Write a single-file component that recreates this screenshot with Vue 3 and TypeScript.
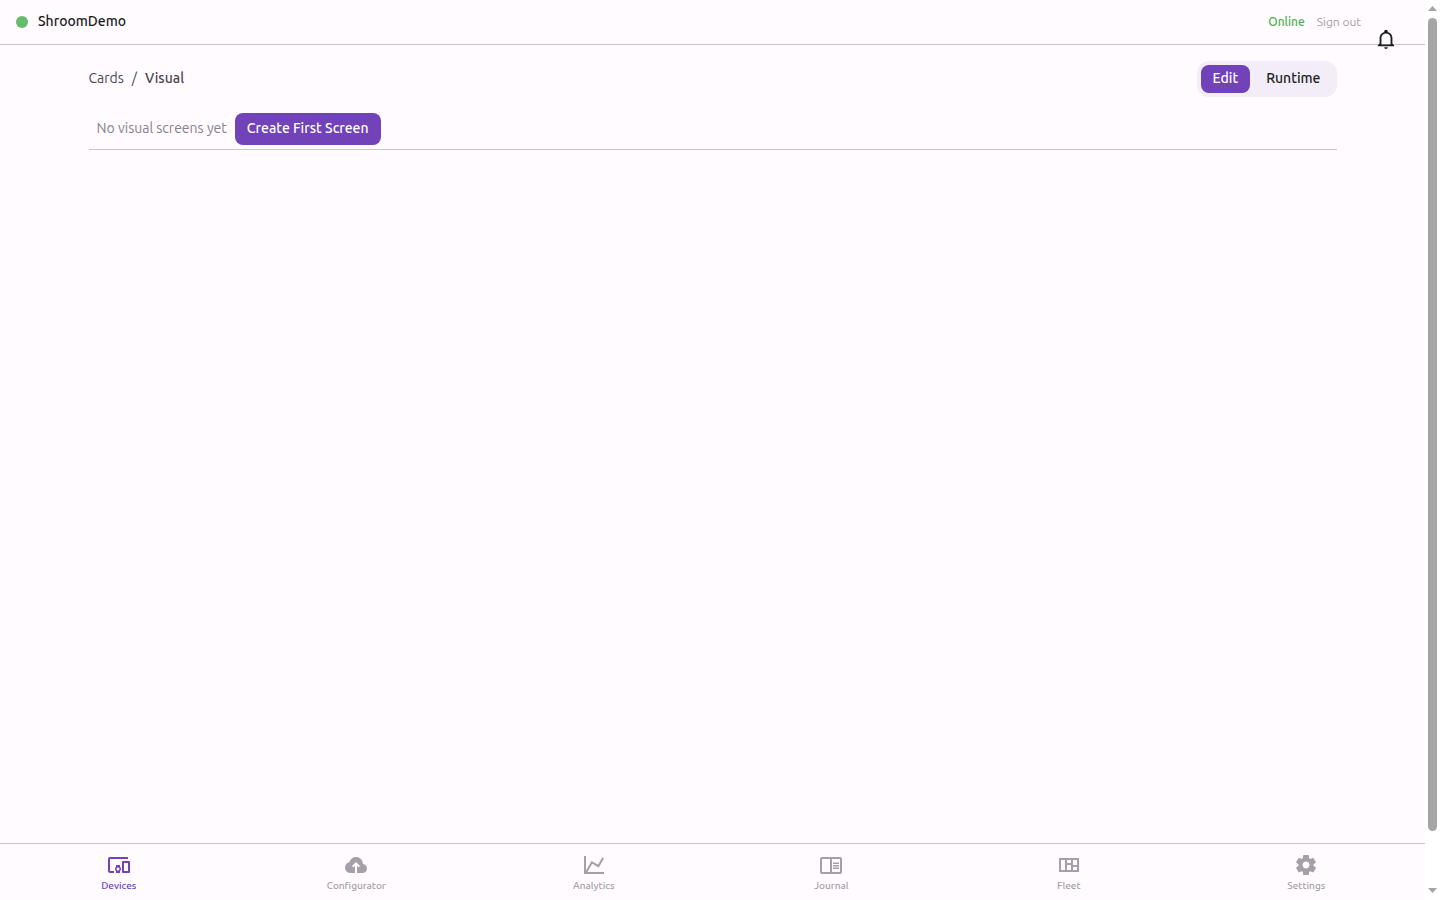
<script setup lang="ts">
import { ref } from 'vue'

interface NavItem {
  label: string
  path: string
}

const modes = ['Edit', 'Runtime']
const mode = ref('Edit')
const active = ref('Devices')

const navItems: NavItem[] = [
  {
    label: 'Devices',
    path: 'M3 6h18V4H3c-1.1 0-2 .9-2 2v12c0 1.1.9 2 2 2h4v-2H3V6zm10 6H9v1.78c-.61.55-1 1.33-1 2.22s.39 1.67 1 2.22V20h4v-1.78c.61-.55 1-1.34 1-2.22s-.39-1.67-1-2.22V12zm-2 5.5c-.83 0-1.5-.67-1.5-1.5s.67-1.5 1.5-1.5 1.5.67 1.5 1.5-.67 1.5-1.5 1.5zM22 8h-6c-.5 0-1 .5-1 1v10c0 .5.5 1 1 1h6c.5 0 1-.5 1-1V9c0-.5-.5-1-1-1zm-1 10h-4v-8h4v8z',
  },
  {
    label: 'Configurator',
    path: 'M11 20H6.5q-2.28 0-3.89-1.57Q1 16.85 1 14.58q0-1.95 1.17-3.48 1.18-1.53 3.08-1.95.63-2.3 2.5-3.72Q9.63 4 12 4q2.93 0 4.96 2.04Q19 8.07 19 11q1.73.2 2.86 1.5 1.14 1.28 1.14 3 0 1.88-1.31 3.19T18.5 20H13v-7.15l1.6 1.55L16 13l-4-4-4 4 1.4 1.4 1.6-1.55z',
  },
  {
    label: 'Analytics',
    path: 'M16 11.78L20.24 4.45L21.97 5.45L16.74 14.5L10.23 10.75L5.46 19H22V21H2V3H4V17.54L9.5 8L16 11.78Z',
  },
  {
    label: 'Journal',
    path: 'M21 4H3A2 2 0 0 0 1 6V19A2 2 0 0 0 3 21H21A2 2 0 0 0 23 19V6A2 2 0 0 0 21 4M3 19V6H11V19H3M21 19H13V6H21V19M14 9.5H20V11H14V9.5M14 12H20V13.5H14V12M14 14.5H20V16H14V14.5Z',
  },
  {
    label: 'Fleet',
    path: 'M2 5V19H22V5H2M8 17H4V7H8V17M14 17H10V12H14V17M14 10H10V7H14V10M20 17H16V14H20V17M20 12H16V7H20V12Z',
  },
  {
    label: 'Settings',
    path: 'M9.25 22l-.4-3.2q-.325-.125-.612-.3t-.563-.375L4.7 19.375l-2.75-4.75 2.575-1.95Q4.5 12.5 4.5 12.337v-.674q0-.163.025-.338L1.95 9.375l2.75-4.75 2.975 1.25q.275-.2.575-.375t.6-.3l.4-3.2h5.5l.4 3.2q.325.125.613.3t.562.375l2.975-1.25 2.75 4.75-2.575 1.95q.025.175.025.338v.674q0 .163-.05.338l2.575 1.95-2.75 4.75-2.95-1.25q-.275.2-.575.375t-.6.3l-.4 3.2zm2.8-6.5q1.45 0 2.475-1.025T15.55 12t-1.025-2.475T12.05 8.5q-1.475 0-2.487 1.025T8.55 12t1.013 2.475T12.05 15.5',
  },
]
</script>

<template>
  <div class="shell">
    <div class="app">
      <header class="topbar">
        <span class="status-dot"></span>
        <span class="device-name">ShroomDemo</span>
        <span class="online">Online</span>
        <button class="sign-out" type="button">Sign out</button>
        <button class="bell" type="button" aria-label="Notifications">
          <svg viewBox="0 0 24 24" width="22" height="22" fill="currentColor">
            <path d="M10 21H14A2 2 0 0 1 12 23A2 2 0 0 1 10 21M21 19V20H3V19L5 17V11C5 7.9 7.03 5.17 10 4.29C10 4.19 10 4.1 10 4A2 2 0 0 1 12 2A2 2 0 0 1 14 4C14 4.1 14 4.19 14 4.29C16.97 5.17 19 7.9 19 11V17L21 19M17 11A5 5 0 0 0 12 6A5 5 0 0 0 7 11V18H17V11Z" />
          </svg>
        </button>
      </header>

      <main class="content">
        <div class="page-head">
          <nav class="crumbs" aria-label="Breadcrumb">
            <a href="#cards">Cards</a>
            <span>/</span>
            <span class="current">Visual</span>
          </nav>
          <div class="segmented">
            <button
              v-for="m in modes"
              :key="m"
              type="button"
              class="segment"
              :class="{ selected: mode === m }"
              :aria-pressed="mode === m"
              @click="mode = m"
            >{{ m }}</button>
          </div>
        </div>
        <div class="screens">
          <span class="empty">No visual screens yet</span>
          <button class="create" type="button">Create First Screen</button>
        </div>
      </main>

      <nav class="bottom-nav" aria-label="Main">
        <button
          v-for="item in navItems"
          :key="item.label"
          type="button"
          class="nav-item"
          :class="{ active: active === item.label }"
          @click="active = item.label"
        >
          <svg viewBox="0 0 24 24" width="24" height="24" fill="currentColor" fill-rule="evenodd" aria-hidden="true">
            <path :d="item.path" />
          </svg>
          <span>{{ item.label }}</span>
        </button>
      </nav>
    </div>

    <div class="scrollbar" aria-hidden="true">
      <svg width="9" height="5" viewBox="0 0 9 5"><path d="M0 5L4.5 0L9 5Z" /></svg>
      <div class="track"><div class="thumb"></div></div>
      <svg width="9" height="5" viewBox="0 0 9 5"><path d="M0 0L4.5 5L9 0Z" /></svg>
    </div>
  </div>
</template>

<style>
body {
  margin: 0;
  background: #fffbfe;
}
</style>

<style scoped>
.shell {
  display: flex;
  height: 100vh;
  overflow: hidden;
  background: #fffbfe;
  color: #1c1b1f;
  font-family: Ubuntu, "Noto Sans", sans-serif;
  font-size: 14px;
  line-height: 20px;
}

button {
  margin: 0;
  padding: 0;
  border: 0;
  background: none;
  color: inherit;
  font: inherit;
  cursor: pointer;
}

svg {
  display: block;
}

.app {
  flex: 1;
  min-width: 0;
  display: flex;
  flex-direction: column;
}

.topbar {
  position: relative;
  box-sizing: border-box;
  height: 45px;
  padding: 0 64px 0 16px;
  display: flex;
  align-items: center;
  border-bottom: 1px solid #cac4d0;
}

.status-dot {
  width: 12px;
  height: 12px;
  margin-right: 10px;
  border-radius: 50%;
  background: #66bb6a;
}

.device-name {
  padding-bottom: 2px;
  font-weight: 500;
}

.online {
  margin-left: auto;
  margin-right: 12px;
  color: #4caf50;
  font-size: 12px;
  font-weight: 500;
}

.sign-out {
  color: #a19da5;
  font-size: 12px;
}

.bell {
  position: absolute;
  top: 28px;
  right: 28px;
}

.content {
  flex: 1;
  box-sizing: border-box;
  width: 100%;
  max-width: 1280px;
  margin: 0 auto;
  padding: 16px;
}

.page-head {
  display: flex;
  align-items: center;
  justify-content: space-between;
}

.crumbs {
  display: flex;
  gap: 8px;
  padding-bottom: 2px;
  color: #49454f;
}

.crumbs a {
  color: inherit;
  text-decoration: none;
}

.current {
  font-weight: 500;
}

.segmented {
  display: flex;
  gap: 4px;
  padding: 4px;
  border-radius: 12px;
  background: #f3edf7;
}

.segment {
  padding: 3px 12px 5px;
  border-radius: 8px;
  font-weight: 500;
}

.segment.selected {
  background: #7142b8;
  color: #ffffff;
}

.screens {
  display: flex;
  align-items: center;
  gap: 8px;
  padding: 16px 8px 4px;
  border-bottom: 1px solid #cac4d0;
}

.empty {
  padding-bottom: 2px;
  color: #85818a;
}

.create {
  padding: 5px 12px 7px;
  border-radius: 8px;
  background: #7142b8;
  color: #ffffff;
  font-weight: 500;
}

.bottom-nav {
  box-sizing: border-box;
  height: 57px;
  display: flex;
  border-top: 1px solid #cac4d0;
}

.nav-item {
  flex: 1;
  padding-top: 2px;
  display: flex;
  flex-direction: column;
  align-items: center;
  justify-content: center;
  gap: 1px;
  color: #a49fa8;
  font-size: 10px;
  font-weight: 500;
  line-height: 15px;
}

.nav-item.active {
  color: #7142b8;
}

.scrollbar {
  box-sizing: border-box;
  width: 15px;
  padding: 6px 3px 7px;
  display: flex;
  flex-direction: column;
  gap: 7px;
  background: #ffffff;
  fill: #a5a5a5;
}

.track {
  flex: 1;
}

.thumb {
  height: 94.2%;
  border-radius: 5px;
  background: #a5a5a5;
}
</style>
